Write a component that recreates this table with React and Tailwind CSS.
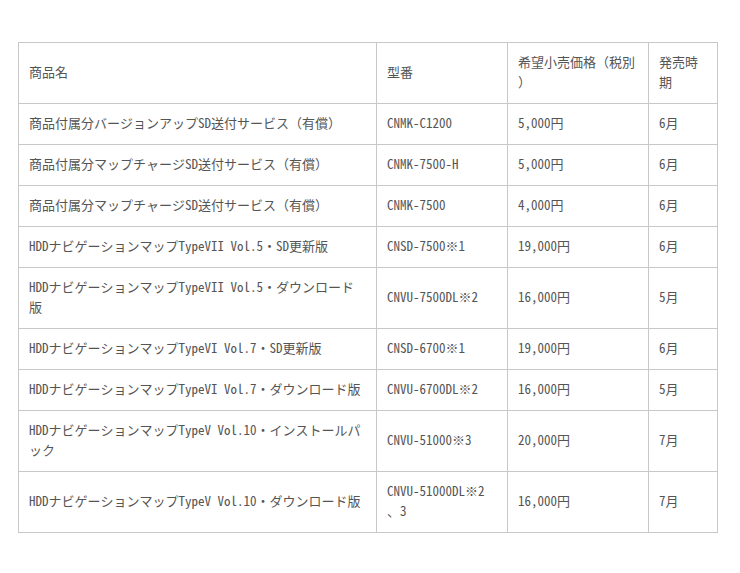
export default function App() {
  const rows = [
    ["商品付属分バージョンアップSD送付サービス（有償）", "CNMK-C1200", "5,000円", "6月"],
    ["商品付属分マップチャージSD送付サービス（有償）", "CNMK-7500-H", "5,000円", "6月"],
    ["商品付属分マップチャージSD送付サービス（有償）", "CNMK-7500", "4,000円", "6月"],
    ["HDDナビゲーションマップTypeVII Vol.5・SD更新版", "CNSD-7500※1", "19,000円", "6月"],
    ["HDDナビゲーションマップTypeVII Vol.5・ダウンロード版", "CNVU-7500DL※2", "16,000円", "5月"],
    ["HDDナビゲーションマップTypeVI Vol.7・SD更新版", "CNSD-6700※1", "19,000円", "6月"],
    ["HDDナビゲーションマップTypeVI Vol.7・ダウンロード版", "CNVU-6700DL※2", "16,000円", "5月"],
    ["HDDナビゲーションマップTypeV Vol.10・インストールパック", "CNVU-51000※3", "20,000円", "7月"],
    ["HDDナビゲーションマップTypeV Vol.10・ダウンロード版", "CNVU-51000DL※2、3", "16,000円", "7月"],
  ];
  const cell = "border border-[#c8c8c8] px-[10px] pt-[9px] pb-[11px] align-middle text-left font-light [line-break:anywhere]";
  return (
    <div className="bg-white w-[740px] h-[573px] pt-[42px] pl-[18px]" style={{ fontFamily: '"Noto Sans Mono CJK JP", "Noto Sans CJK JP", monospace' }}>
      <table className="border-collapse table-fixed w-[699px] text-[13px] leading-[20px] text-[#555555]">
        <colgroup>
          <col className="w-[358px]" />
          <col className="w-[131px]" />
          <col className="w-[141px]" />
          <col className="w-[69px]" />
        </colgroup>
        <thead>
          <tr>
            <th className={cell}>商品名</th>
            <th className={cell}>型番</th>
            <th className={cell}>希望小売価格（税別）</th>
            <th className={cell}>発売時期</th>
          </tr>
        </thead>
        <tbody>
          {rows.map((r, i) => (
            <tr key={i}>
              {r.map((c, j) => (
                <td key={j} className={cell}>{c}</td>
              ))}
            </tr>
          ))}
        </tbody>
      </table>
    </div>
  );
}
